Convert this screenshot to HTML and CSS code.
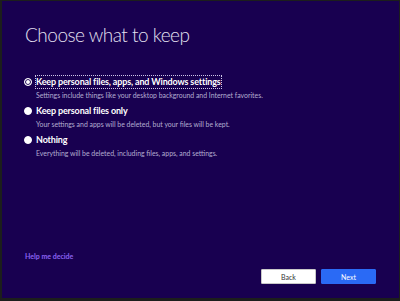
FILE: index.html
```html
<!DOCTYPE html>
<html lang="en">
<head>
    <meta charset="UTF-8">
    <title>Choose what to keep</title>
    <link rel="stylesheet" href="styles.css">
</head>
<body>
    <div class="window">
        <h1>Choose what to keep</h1>

        <div class="options">
            <label class="option">
                <span class="radio checked"></span>
                <span class="text">
                    <span class="title focused">Keep personal files, apps, and Windows settings</span>
                    <span class="desc">Settings include things like your desktop background and Internet favorites.</span>
                </span>
            </label>
            <label class="option">
                <span class="radio"></span>
                <span class="text">
                    <span class="title">Keep personal files only</span>
                    <span class="desc">Your settings and apps will be deleted, but your files will be kept.</span>
                </span>
            </label>
            <label class="option">
                <span class="radio"></span>
                <span class="text">
                    <span class="title">Nothing</span>
                    <span class="desc">Everything will be deleted, including files, apps, and settings.</span>
                </span>
            </label>
        </div>

        <div class="footer">
            <a class="help" href="#">Help me decide</a>
            <div class="buttons">
                <button class="btn back">Back</button>
                <button class="btn next">Next</button>
            </div>
        </div>
    </div>
</body>
</html>
```

FILE: styles.css
```css
html, body {
    margin: 0;
    padding: 0;
    height: 100%;
}
body {
    background-color: #1c1e1c;
    font-family: 'Lato', 'Open Sans', sans-serif;
    padding: 1px 1px 3px 2px;
    box-sizing: border-box;
}
.window {
    background-color: #180050;
    height: 100%;
    box-sizing: border-box;
    padding: 20px 23px 0 23px;
    display: flex;
    flex-direction: column;
}
h1 {
    margin: 0;
    font-weight: 300;
    font-size: 19px;
    letter-spacing: -0.5px;
    color: #e4e0f0;
    line-height: 28px;
}
.options {
    margin-top: 27px;
    margin-left: -1px;
    display: flex;
    flex-direction: column;
    gap: 3px;
}
.option {
    display: flex;
    align-items: flex-start;
    gap: 4px;
}
.radio {
    width: 8px;
    height: 8px;
    margin-top: 2px;
    border-radius: 50%;
    background-color: #ffffff;
    border: 1px solid #ffffff;
    box-sizing: border-box;
}
.radio.checked {
    background-color: #ffffff;
    box-shadow: inset 0 0 0 1px #180050;
}
.text {
    display: flex;
    flex-direction: column;
}
.title {
    color: #ffffff;
    font-size: 9px;
    letter-spacing: -0.15px;
    line-height: 12px;
    font-weight: 700;
}
.title.focused {
    align-self: flex-start;
    outline: 1px dotted #cfc8e8;
    outline-offset: 0;
}
.desc {
    color: #b4aed0;
    font-size: 6.9px;
    line-height: 14px;
}
.footer {
    margin-top: auto;
    padding-bottom: 14px;
    display: flex;
    flex-direction: column;
}
.help {
    color: #8a62f0;
    font-size: 7px;
    font-weight: 700;
    text-decoration: none;
}
.buttons {
    margin-top: 9px;
    display: flex;
    justify-content: flex-end;
    gap: 5px;
}
.btn {
    width: 55px;
    height: 15px;
    padding: 0;
    font-family: inherit;
    font-size: 7px;
    border-radius: 1px;
}
.back {
    background-color: #ffffff;
    border: 1px solid #c8c8c8;
    color: #333333;
}
.next {
    background-color: #2a6af5;
    border: 1px solid #2a6af5;
    color: #ffffff;
}
```
